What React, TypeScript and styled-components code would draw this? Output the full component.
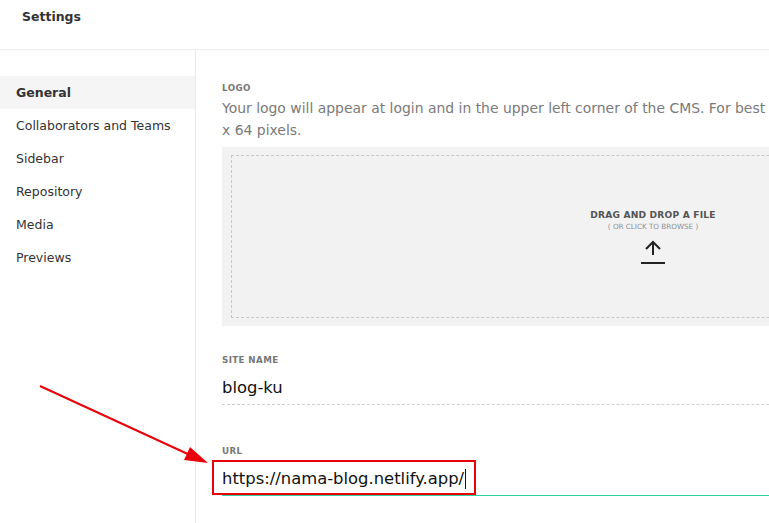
import React from "react";
import styled, { createGlobalStyle } from "styled-components";

const Global = createGlobalStyle`
  html, body { margin: 0; padding: 0; background: #fff; overflow: hidden; }
  body { font-family: "DejaVu Sans", "Liberation Sans", sans-serif; color: #333; }
  #root { width: 769px; height: 523px; overflow: hidden; position: relative; }
`;

const Page = styled.div`
  display: flex;
  flex-direction: column;
  width: 769px;
  height: 523px;
`;

const Header = styled.header`
  height: 50px;
  flex: 0 0 auto;
  box-sizing: border-box;
  border-bottom: 1px solid #ececec;
  padding: 9px 0 0 22px;
  font-size: 12.5px;
  font-weight: bold;
  line-height: 16px;
  color: #333;
`;

const Body = styled.div`
  display: flex;
  flex: 1 1 auto;
  min-height: 0;
`;

const Sidebar = styled.nav`
  width: 196px;
  flex: 0 0 196px;
  box-sizing: border-box;
  border-right: 1px solid #e8e8e8;
  padding-top: 26px;
  display: flex;
  flex-direction: column;
`;

const NavItem = styled.div<{ $active?: boolean }>`
  height: 33px;
  display: flex;
  align-items: center;
  padding-left: 16px;
  font-size: 12.5px;
  color: #333;
  font-weight: ${(p) => (p.$active ? "bold" : "normal")};
  background: ${(p) => (p.$active ? "#f5f5f5" : "transparent")};
`;

const Main = styled.main`
  flex: 0 0 auto;
  padding: 32px 0 0 26px;
  width: 862px;
`;

const Label = styled.div`
  font-size: 8.7px;
  font-weight: bold;
  letter-spacing: 0.4px;
  line-height: 12px;
  color: #777;
  text-transform: uppercase;
`;

const Description = styled.p`
  margin: 3px 0 0;
  font-size: 13.93px;
  line-height: 22px;
  color: #7a7a7a;
  white-space: nowrap;
`;

const DropZone = styled.div`
  margin-top: 6px;
  height: 179px;
  box-sizing: border-box;
  background: #f2f2f2;
  padding: 8px 9px;
  display: flex;
`;

const DropInner = styled.div`
  flex: 1;
  border: 1px dashed #c8c8c8;
  display: flex;
  flex-direction: column;
  align-items: center;
  padding-top: 54px;
`;

const DropTitle = styled.div`
  font-size: 9.1px;
  font-weight: bold;
  color: #555;
  letter-spacing: 0.2px;
  line-height: 11px;
`;

const DropSub = styled.div`
  font-size: 7.2px;
  color: #8b8f9a;
  line-height: 10px;
  margin-top: 1px;
`;

const UploadIcon = styled.svg`
  margin-top: 8px;
  display: block;
`;

const Field = styled.div<{ $gap: number }>`
  margin-top: ${(p) => p.$gap}px;
  position: relative;
`;

const Value = styled.div<{ $focused?: boolean }>`
  margin-top: 5px;
  height: 34px;
  box-sizing: border-box;
  display: flex;
  align-items: center;
  font-size: 16.4px;
  color: #111;
  border-bottom: 1px ${(p) => (p.$focused ? "solid #2fd3a0" : "dashed #cfcfcf")};
`;

const Caret = styled.span`
  display: inline-block;
  width: 1px;
  height: 20px;
  background: #111;
  margin-left: 1px;
`;

const Highlight = styled.div`
  position: absolute;
  left: -10px;
  top: 15px;
  width: 264px;
  height: 35px;
  box-sizing: border-box;
  border: 2px solid #e8000b;
  pointer-events: none;
`;

const ArrowOverlay = styled.svg`
  position: absolute;
  left: 0;
  top: 0;
  pointer-events: none;
`;

const navItems = ["General", "Collaborators and Teams", "Sidebar", "Repository", "Media", "Previews"];

export default function App() {
  return (
    <>
      <Global />
      <Page>
        <Header>Settings</Header>
        <Body>
          <Sidebar>
            {navItems.map((n, i) => (
              <NavItem key={n} $active={i === 0}>
                {n}
              </NavItem>
            ))}
          </Sidebar>
          <Main>
            <Label>Logo</Label>
            <Description>
              Your logo will appear at login and in the upper left corner of the CMS. For best results, use a square image of 64
              <br />x 64 pixels.
            </Description>
            <DropZone>
              <DropInner>
                <DropTitle>DRAG AND DROP A FILE</DropTitle>
                <DropSub>( OR CLICK TO BROWSE )</DropSub>
                <UploadIcon width="26" height="25" viewBox="0 0 26 25">
                  <path d="M13 2 V15 M6 9 L13 2 L20 9" fill="none" stroke="#222" strokeWidth="2" />
                  <path d="M1 23 H25" stroke="#222" strokeWidth="2" />
                </UploadIcon>
              </DropInner>
            </DropZone>
            <Field $gap={28}>
              <Label>Site Name</Label>
              <Value>blog-ku</Value>
            </Field>
            <Field $gap={40}>
              <Label>URL</Label>
              <Value $focused>
                https://nama-blog.netlify.app/
                <Caret />
              </Value>
              <Highlight />
            </Field>
          </Main>
        </Body>
      </Page>
      <ArrowOverlay width="769" height="523" viewBox="0 0 769 523">
        <line x1="40" y1="386" x2="190" y2="455" stroke="#e8000b" strokeWidth="2" />
        <polygon points="208,463 184,460 190,447" fill="#e8000b" />
      </ArrowOverlay>
    </>
  );
}
